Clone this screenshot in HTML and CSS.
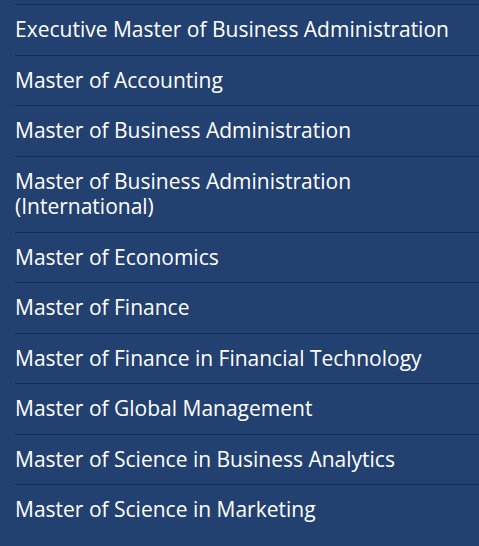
FILE: index.html
```html
<!DOCTYPE html>
<html lang="en">
<head>
    <meta charset="UTF-8">
    <title>Master Programmes</title>
    <link rel="stylesheet" href="styles.css">
</head>
<body>
<div class="menu">
    <ul class="program-list">
        <li><a href="#">Executive Master of Business Administration</a></li>
        <li><a href="#">Master of Accounting</a></li>
        <li><a href="#">Master of Business Administration</a></li>
        <li><a href="#">Master of Business Administration<br>(International)</a></li>
        <li><a href="#">Master of Economics</a></li>
        <li><a href="#">Master of Finance</a></li>
        <li><a href="#">Master of Finance in Financial Technology</a></li>
        <li><a href="#">Master of Global Management</a></li>
        <li><a href="#">Master of Science in Business Analytics</a></li>
        <li><a href="#">Master of Science in Marketing</a></li>
    </ul>
</div>
</body>
</html>
```

FILE: styles.css
```css
html, body {
    margin: 0;
    height: 100%;
    background: #234170;
}

body {
    font-family: 'Open Sans', 'Noto Sans', sans-serif;
}

.menu {
    padding: 4px 0 0 15px;
}

.program-list {
    list-style: none;
    margin: 0;
    padding: 0;
}

.program-list li {
    border-top: 1px solid #112c58;
}

.program-list a {
    display: block;
    padding: 12px 0;
    font-size: 21px;
    line-height: 25.5px;
    color: #ffffff;
    text-decoration: none;
}
```
